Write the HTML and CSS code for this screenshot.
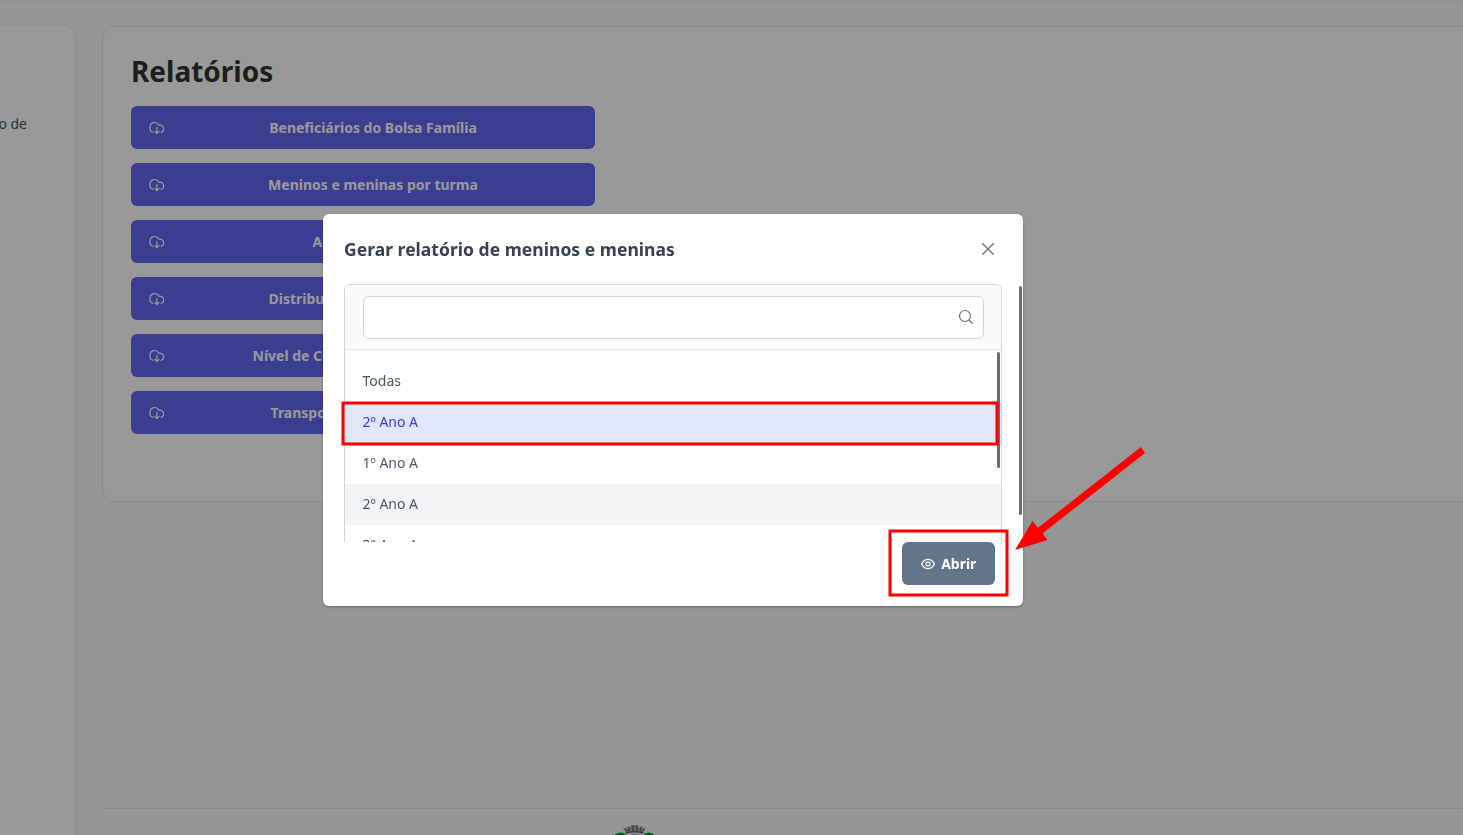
FILE: index.html
```html
<!DOCTYPE html>
<html lang="pt-BR">
<head>
<meta charset="utf-8">
<title>Relatórios</title>
<link rel="stylesheet" href="styles.css">
</head>
<body>
<svg class="defs" aria-hidden="true">
  <symbol id="cloud" viewBox="0 0 16 14"><path d="M3.900 11.400C2 10.900 1 9.600 1 7.500V5.700A4.500 4.500 0 0 1 9.600 4.200C12.600 3.800 14.700 5.500 14.700 8.100C14.700 9.700 13.700 11 12.100 11.400M7.900 6.400V12.300M5.700 10.300L7.900 12.500L10.100 10.300"/></symbol>
  <symbol id="eye" viewBox="0 0 14 14"><path d="M.6 7C2 4 4.300 2.400 7 2.400S12 4 13.400 7C12 10 9.700 11.600 7 11.600S2 10 .6 7Z"/><circle cx="7" cy="7" r="2.100"/></symbol>
</svg>
<div class="page">
  <aside class="sidebar"><span>o de</span></aside>
  <main class="main">
    <section class="card">
      <h1 class="title">Relatórios</h1>
      <div class="reports">
        <button class="report"><svg class="cloud"><use href="#cloud"/></svg><span class="label">Beneficiários do Bolsa Família</span></button>
        <button class="report"><svg class="cloud"><use href="#cloud"/></svg><span class="label">Meninos e meninas por turma</span></button>
        <button class="report"><svg class="cloud"><use href="#cloud"/></svg><span class="label label-short">A</span></button>
        <button class="report"><svg class="cloud"><use href="#cloud"/></svg><span class="label label-mid">Distribu</span></button>
        <button class="report"><svg class="cloud"><use href="#cloud"/></svg><span class="label label-long">Nível de Co</span></button>
        <button class="report"><svg class="cloud"><use href="#cloud"/></svg><span class="label label-bus">Transpo</span></button>
      </div>
    </section>
    <footer class="footer">
      <svg class="crest" width="44" height="12" viewBox="0 0 44 12">
        <path d="M0 12Q2 7.500 8 7.500Q13 7.500 14 12ZM29 12Q31 7.500 36 7.500Q41 7.500 42 12Z" fill="#089a3a"/>
        <path d="M10 2L14 4L13 1L17 3L18 0H25L26 3L30 1L29 4L33 2L30 9Q21 7 13 9Z" fill="#aaa"/>
        <path d="M12 4L15 6M16 2V6M20 1V6M24 1V6M28 2L27 6M31 4L28 7M13 8Q21 5 30 8" fill="none" stroke="#555" stroke-width="1"/>
        <path d="M13 12Q21 6 30 12Z" fill="#999"/>
      </svg>
    </footer>
  </main>
</div>
<div class="mask">
  <div class="dialog">
    <header class="dialog-header"><h2>Gerar relatório de meninos e meninas</h2>
      <svg class="close" width="14" height="14" viewBox="0 0 14 14"><path d="M1.700 1.700L12.300 12.300M12.300 1.700L1.700 12.300"/></svg>
    </header>
    <div class="dialog-content">
      <div class="listbox">
        <div class="filter"><div class="search"><svg width="16" height="16" viewBox="0 0 16 16"><circle cx="7" cy="7" r="5.500"/><path d="M11 11L14.300 14.300"/></svg></div></div>
        <ul class="options">
          <li>Todas</li><li class="selected">2º Ano A</li><li>1º Ano A</li><li class="hovered">2º Ano A</li><li>3º Ano A</li>
        </ul>
      </div>
      <div class="bar bar-inner"></div>
      <div class="bar bar-outer"></div>
    </div>
    <footer class="dialog-footer"><button class="open"><svg width="14" height="14"><use href="#eye"/></svg>Abrir</button></footer>
  </div>
</div>
<svg class="annotations" width="1463" height="835" viewBox="0 0 1463 835">
  <rect x="343" y="403" width="654" height="41"/>
  <rect x="890" y="531" width="117" height="64"/>
  <path class="arrow" d="M1015 550L1032.500 521L1038 527.800L1141 447L1145 453L1042.500 533.500L1047.500 540Z"/>
</svg>
</body>
</html>
```
FILE: styles.css
```css
* { box-sizing: border-box; }
body {
  margin: 0;
  height: 835px;
  overflow: hidden;
  background: #f8fafc;
  color: #4b5563;
  font: 14px/21px "Noto Sans", sans-serif;
}
button { font: inherit; border: 0; padding: 0; }
svg { fill: none; stroke: currentColor; stroke-linecap: round; stroke-linejoin: round; flex: none; }
.defs { position: absolute; width: 0; height: 0; }
.page { display: flex; gap: 27px; height: 835px; padding-top: 26px; box-shadow: inset 0 4px 4px -3px #00000012; }
.sidebar {
  width: 75px;
  height: 850px;
  flex: none;
  padding-top: 87px;
  background: #fff;
  border-radius: 0 12px 0 0;
  box-shadow: 0 3px 5px #00000005, 0 0 2px #0000000d, 0 1px 4px #00000014;
}
.sidebar span { display: flex; justify-content: flex-end; width: 27px; white-space: nowrap; }
.main { flex: none; width: 1400px; display: flex; flex-direction: column; justify-content: space-between; }
.card {
  height: 476px;
  padding: 26px 28px;
  background: #fff;
  border: 1px solid #e2e8f0;
  border-radius: 12px;
}
.title { margin: 0 0 16px; color: #333; font-size: 28px; line-height: 37px; font-weight: 700; }
.reports { display: flex; flex-direction: column; gap: 14px; width: 464px; }
.report {
  display: flex;
  align-items: center;
  height: 43px;
  padding: 0 13.500px 0 17.500px;
  border-radius: 6px;
  background: #6366f1;
  color: #fff;
  font-weight: 700;
}
.cloud { width: 16px; height: 14px; stroke-width: 1.200; }
.label { flex: 1; text-align: center; white-space: nowrap; }
.label-short, .label-mid, .label-long, .label-bus { text-align: left; }
.label-short { padding-left: 148px; }
.label-mid { padding-left: 104px; }
.label-long { padding-left: 88px; }
.label-bus { padding-left: 106px; }
.footer { height: 27px; padding: 16px 0 0 511px; border-top: 1px solid #dfe3e8; }
.crest { display: block; stroke: none; }
.mask {
  position: fixed;
  inset: 0;
  display: flex;
  align-items: flex-start;
  padding: 214px 0 0 323px;
  background: rgba(0, 0, 0, .4);
}
.dialog {
  width: 700px;
  height: 392px;
  background: #fff;
  border-radius: 6px;
  box-shadow: 0 1px 3px #0000004d;
}
.dialog-header { display: flex; justify-content: space-between; align-items: center; height: 70px; padding: 0 28px 0 21px; }
.dialog-header h2 { margin: 0; color: #374151; font-size: 17.500px; line-height: 26px; font-weight: 700; letter-spacing: .03px; }
.close { color: #6b7280; stroke-width: 1.400; }
.dialog-content { position: relative; height: 258px; padding: 0 21px; overflow: hidden; }
.listbox { height: 300px; border: 1px solid #d1d5db; border-radius: 6px; }
.filter { height: 65px; padding: 11px 17px 10px 18px; background: #f9fafb; border-bottom: 1px solid #e5e7eb; border-radius: 6px 6px 0 0; }
.search { display: flex; align-items: center; justify-content: flex-end; height: 43px; padding: 0 9px 1px 0; border: 1px solid #d1d5db; border-radius: 6px; background: #fff; color: #6b7280; stroke-width: 1.200; }
.options { margin: 0; padding: 11px 0 0; list-style: none; }
.options li { height: 41px; padding: 9px 17.500px; }
.options .selected { color: #4338ca; background: #e0e7ff; }
.options .hovered { background: #f3f4f6; }
.bar { position: absolute; width: 3px; border-radius: 2px; background: #6c6c6c; }
.bar-inner { left: 674px; top: 68px; height: 116px; }
.bar-outer { left: 696px; top: 2px; height: 229px; }
.dialog-footer { display: flex; justify-content: flex-end; padding-right: 28px; }
.open { display: flex; align-items: center; justify-content: center; gap: 6.500px; width: 93px; height: 43px; border-radius: 6px; background: #64748b; color: #fff; font-weight: 700; }
.open svg { stroke-width: 1.200; }
.annotations { position: fixed; left: 0; top: 0; pointer-events: none; }
.annotations rect { stroke: #f00; stroke-width: 3; stroke-linejoin: miter; }
.annotations .arrow { fill: #f00; stroke: none; }
```
